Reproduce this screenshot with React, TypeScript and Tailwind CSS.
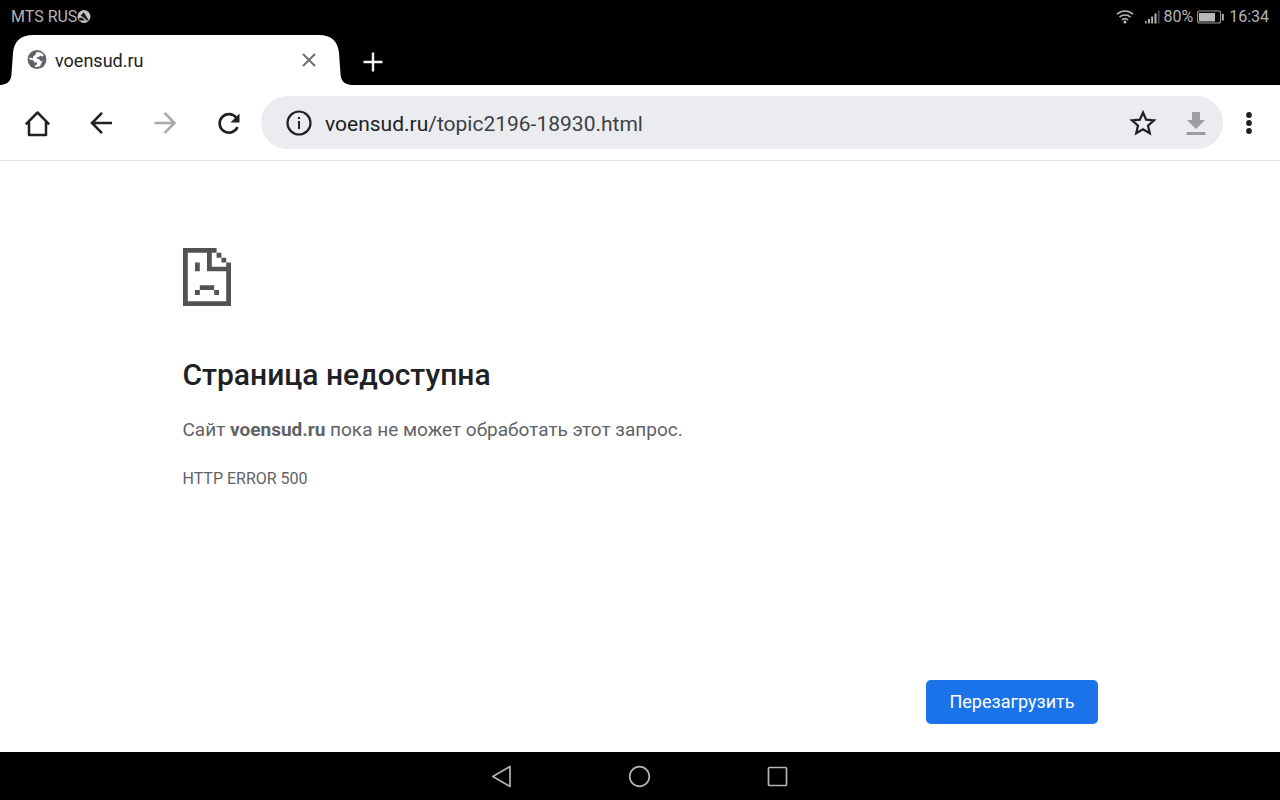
import React from "react";

function StatusBar() {
  return (
    <div className="flex h-[34px] items-center justify-between bg-black pl-[11px] pr-[11px] text-base leading-5 text-[#b4b4b4]">
      <div className="flex items-center">
        <span>MTS RUS</span>
        <svg width="14" height="14" viewBox="0 0 14 14" aria-hidden="true">
          <circle cx="7" cy="6.500" r="6.500" fill="#c4c4c4" />
          <path d="M6.800 2.200 11.800 10.400 H10 L3.600 5.600 Z" fill="#1c1c1c" />
          <path d="M1.800 8 5 7.400 8.400 10.400 H2.600 Z" fill="#1c1c1c" />
          <path d="M3.600 6 9.400 10.600" stroke="#c4c4c4" strokeWidth="0.900" />
        </svg>
      </div>
      <div className="flex items-center">
        <svg className="mr-[11px]" width="18" height="14" viewBox="0 0 18 14" fill="none" stroke="#b4b4b4" strokeWidth="1.600" aria-hidden="true">
          <path d="M1 4.200C5.600 0 12.400 0 17 4.200" />
          <path d="M3.500 7.200C6.700 4.300 11.300 4.300 14.500 7.200" />
          <path d="M5.900 10C7.700 8.300 10.300 8.300 12.100 10" />
          <circle cx="9" cy="12" r="1.500" fill="#c4c4c4" stroke="none" />
        </svg>
        <svg className="mr-[3px]" width="15" height="14" viewBox="0 0 15 14" fill="#b4b4b4" aria-hidden="true">
          <rect x="0" y="11" width="1.600" height="2.500" />
          <rect x="3" y="9" width="1.900" height="4.500" />
          <rect x="6.200" y="6.500" width="1.900" height="7" />
          <rect x="9.500" y="3.500" width="2" height="10" />
          <rect x="12.800" y="0.500" width="1.800" height="13" fill="#4a4a4a" />
        </svg>
        <span>80%</span>
        <svg className="ml-1 mr-[5px]" width="27" height="14" viewBox="0 0 27 14" aria-hidden="true">
          <rect x="0.600" y="1" width="23" height="12" rx="2" fill="none" stroke="#999" strokeWidth="1.100" />
          <rect x="2" y="3" width="16" height="8.500" fill="#b8b8b8" />
          <rect x="25" y="4" width="1.800" height="6.500" fill="#b4b4b4" />
        </svg>
        <span>16:34</span>
      </div>
    </div>
  );
}

function TabStrip() {
  return (
    <div className="flex h-[51px] items-stretch bg-black pl-px">
      <svg width="32" height="51" viewBox="0 0 32 51" fill="#fff" aria-hidden="true">
        <path d="M0 51C7 50 10 47 10.500 40L12 19C13 7 20 1 32 1V51Z" />
      </svg>
      <div className="flex w-[286px] items-center bg-white bg-clip-content pt-px">
        <button type="button" className="-ml-[6px] flex flex-1 items-center gap-2 text-left text-lg leading-6 text-[#202124]">
          <svg width="20" height="20" viewBox="0 0 20 20" aria-hidden="true">
            <circle cx="10" cy="9.500" r="9.400" fill="#5f6368" />
            <path d="M9.600 2C12 1.800 14.200 2.600 15.600 3.800L16.800 5.400 15.200 6.400 13.200 5.800 12.200 6.800 10 7.200 9.400 8.600 12 9 13.200 10.800 15.400 11.400 14 14 13.200 16C11.400 17 9.600 17.300 7.600 16.800L8.800 15 10.200 14.200 9.800 12.400 7.200 12.200 6.400 10.200 2.400 9.600C2.300 8.800 2.500 8.200 2.700 7.600L5.800 8.600 6.400 6.200 8.400 4.800Z" fill="#fff" />
          </svg>
          <span className="pt-px">voensud.ru</span>
        </button>
        <button type="button" aria-label="Закрыть вкладку" className="mr-[2px]">
          <svg width="16" height="16" viewBox="0 0 16 16" fill="none" stroke="#6b6e71" strokeWidth="1.900" aria-hidden="true">
            <path d="M2 2 14 14M14 2 2 14" />
          </svg>
        </button>
      </div>
      <svg width="32" height="51" viewBox="0 0 32 51" fill="#fff" aria-hidden="true">
        <path d="M32 51C25 50 22 47 21.500 40L20 19C19 7 12 1 0 1V51Z" />
      </svg>
      <button type="button" aria-label="Новая вкладка" className="ml-3 pt-1">
        <svg width="20" height="20" viewBox="0 0 20 20" fill="none" stroke="#f1f3f4" strokeWidth="2.400" aria-hidden="true">
          <path d="M10 .5V19.500M.5 10H19.500" />
        </svg>
      </button>
    </div>
  );
}

function Toolbar() {
  return (
    <div className="flex h-[76px] items-center border-b border-[#dfe0e2] bg-white">
      <div className="flex w-[261px] shrink-0 items-center gap-9 pl-6">
        <button type="button" aria-label="Главная страница">
          <svg width="28" height="28" viewBox="0 0 28 28" fill="none" stroke="#202124" strokeWidth="2.500" strokeLinejoin="round" aria-hidden="true">
            <path d="M1.800 15.300 13.500 3.500 25.200 15.300M5 13V26H22V13" />
          </svg>
        </button>
        <button type="button" aria-label="Назад">
          <svg width="28" height="28" viewBox="0 0 28 28" fill="none" stroke="#202124" strokeWidth="2.600" aria-hidden="true">
            <path d="M24 14H4.500M14 3.800 4 14 14 24.200" />
          </svg>
        </button>
        <button type="button" aria-label="Вперёд" disabled>
          <svg width="28" height="28" viewBox="0 0 28 28" fill="none" stroke="#a9aaab" strokeWidth="2.600" aria-hidden="true">
            <path d="M2.500 14H22M12.500 3.800 22.500 14 12.500 24.200" />
          </svg>
        </button>
        <button type="button" aria-label="Обновить">
          <svg width="28" height="28" viewBox="0 0 28 28" aria-hidden="true">
            <path d="M20.300 8.700A9.300 9.300 0 1 0 21.500 18" fill="none" stroke="#202124" strokeWidth="2.700" />
            <path d="M23.500 4.500V13.500H14.500Z" fill="#202124" />
          </svg>
        </button>
      </div>
      <div className="flex h-[53px] min-w-0 flex-1 items-center rounded-full bg-[#ebecf0] pl-6 pr-[14px]">
        <button type="button" aria-label="Сведения о сайте">
          <svg width="28" height="28" viewBox="0 0 28 28" fill="none" aria-hidden="true">
            <circle cx="14" cy="14" r="11.500" stroke="#202124" strokeWidth="2.200" />
            <path d="M14 12V20M14 8V10" stroke="#202124" strokeWidth="2" />
          </svg>
        </button>
        <a href="#" className="ml-3 flex-1 truncate pt-[2px] text-[21px] leading-7 text-[#3c4043]" aria-label="Адрес страницы">
          <span className="text-[#202124]">voensud.ru</span>/topic2196-18930.html
        </a>
        <button type="button" aria-label="Добавить в закладки" className="mr-[29px]">
          <svg width="28" height="28" viewBox="0 0 28 28" fill="none" stroke="#202124" strokeWidth="2.200" aria-hidden="true">
            <path d="M14 3.500 17.100 10.700 25 11.400 19 16.600 20.800 24.200 14 20.200 7.200 24.200 9 16.600 3 11.400 10.900 10.700Z" />
          </svg>
        </button>
        <button type="button" aria-label="Скачать" disabled className="mr-[3px]">
          <svg width="20" height="26" viewBox="0 0 20 26" fill="#9d9ea1" aria-hidden="true">
            <path d="M6 2H14V10H19L10 19 1 10H6Z" />
            <rect x="0.500" y="22" width="19" height="3" />
          </svg>
        </button>
      </div>
      <button type="button" aria-label="Меню" className="ml-[22px] mr-[27px]">
        <svg width="8" height="28" viewBox="0 0 8 28" fill="#202124" aria-hidden="true">
          <circle cx="4" cy="6" r="2.900" />
          <circle cx="4" cy="14" r="2.900" />
          <circle cx="4" cy="22" r="2.900" />
        </svg>
      </button>
    </div>
  );
}

function ErrorPage() {
  return (
    <main className="mx-auto flex w-full max-w-[915px] flex-1 flex-col pb-7 pt-[87px]">
      <svg width="48" height="58" viewBox="0 0 10 12" preserveAspectRatio="none" fill="#535353" aria-hidden="true">
        <path d="M0 0H7V1H1V11H9V4.800H5V1H6V3.900H9V3H10V12H0Z" />
        <path d="M7 1H8V2H7ZM8 2H9V3H8ZM2.500 3H3.500V4.800H2.500ZM3.500 7.700H6.500V8.700H3.500ZM2.500 8.700H3.500V9.700H2.500ZM6.500 8.700H7.500V9.700H6.500Z" />
      </svg>
      <h1 className="mt-[51px] text-[30px] font-medium leading-9 text-[#202124]">Страница недоступна</h1>
      <p className="mt-[23px] text-[19px] leading-7 text-[#5f6368]">
        Сайт <strong>voensud.ru</strong> пока не может обработать этот запрос.
      </p>
      <p className="mt-[23px] text-base leading-6 text-[#5f6368]">HTTP ERROR 500</p>
      <button type="button" className="mt-auto h-11 self-end rounded-[5px] bg-[#1a73e8] px-[23px] text-[18px] leading-6 text-white">
        Перезагрузить
      </button>
    </main>
  );
}

function NavigationBar() {
  return (
    <nav className="flex h-12 items-center justify-center gap-[114px] bg-black">
      <button type="button" aria-label="Назад">
        <svg width="24" height="24" viewBox="0 0 24 24" fill="none" stroke="#b4b4b4" strokeWidth="1.700" strokeLinejoin="round" aria-hidden="true">
          <path d="M20 2.500V22.500L2.800 12.500Z" />
        </svg>
      </button>
      <button type="button" aria-label="Домой">
        <svg width="24" height="24" viewBox="0 0 24 24" fill="none" stroke="#b4b4b4" strokeWidth="1.700" aria-hidden="true">
          <circle cx="11.500" cy="12.500" r="9.800" />
        </svg>
      </button>
      <button type="button" aria-label="Недавние">
        <svg width="24" height="24" viewBox="0 0 24 24" fill="none" stroke="#b4b4b4" strokeWidth="1.700" aria-hidden="true">
          <rect x="2.500" y="3.500" width="18" height="18" rx="1" />
        </svg>
      </button>
    </nav>
  );
}

export default function App() {
  return (
    <div className="flex min-h-screen flex-col bg-white font-['Roboto',sans-serif]">
      <StatusBar />
      <TabStrip />
      <Toolbar />
      <ErrorPage />
      <NavigationBar />
    </div>
  );
}
